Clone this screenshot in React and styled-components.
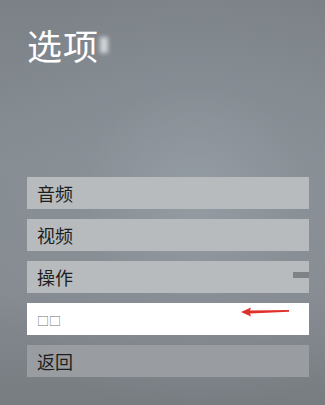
import React from "react";
import styled, { createGlobalStyle } from "styled-components";

const Global = createGlobalStyle`
  html, body { margin: 0; padding: 0; }
  body {
    width: 325px;
    height: 405px;
    overflow: hidden;
    font-family: "Noto Sans CJK SC", "Noto Sans", sans-serif;
  }
`;

const Screen = styled.div`
  position: relative;
  width: 325px;
  height: 405px;
  box-sizing: border-box;
  padding: 20px 16px 0 27px;
  background:
    radial-gradient(ellipse 70% 55% at 60% 48%, rgba(150,158,165,0.9) 0%, rgba(140,147,154,0.4) 50%, rgba(120,126,132,0) 100%),
    linear-gradient(180deg, #7b8187 0%, #868d93 40%, #868c92 70%, #777c81 100%);
  display: flex;
  flex-direction: column;
  overflow: hidden;
`;

const TitleRow = styled.div`
  display: flex;
  align-items: center;
  height: 50px;
`;

const Title = styled.h1`
  margin: 0;
  font-size: 35px;
  font-weight: 400;
  color: #ffffff;
  line-height: 50px;
  letter-spacing: 1px;
`;

const Glow = styled.span`
  width: 8px;
  height: 16px;
  margin-left: 1px;
  background: rgba(235, 238, 240, 0.75);
  filter: blur(2px);
`;

const Menu = styled.div`
  margin-top: 107px;
  width: 282px;
  display: flex;
  flex-direction: column;
  gap: 10px;
`;

const Item = styled.div`
  position: relative;
  height: 32px;
  box-sizing: border-box;
  padding-left: 10px;
  display: flex;
  align-items: ${(p) => (p.$selected ? "flex-end" : "center")};
  padding-bottom: ${(p) => (p.$selected ? "8px" : "0")};
  background: ${(p) =>
    p.$selected ? "#ffffff" : p.$dim ? "#999da1" : "#b7bbbe"};
  color: ${(p) => (p.$selected ? "#707070" : "#1e1e1e")};
  font-size: ${(p) => (p.$selected ? "12px" : "18px")};
  line-height: 1;
`;

const Notch = styled.span`
  position: absolute;
  right: 0;
  top: 11px;
  width: 16px;
  height: 6px;
  background: #7f8387;
`;

const Arrow = styled.svg`
  position: absolute;
  left: 212px;
  top: 3px;
`;

export default function App() {
  return (
    <>
      <Global />
      <Screen>
        <TitleRow>
          <Title>选项</Title>
          <Glow />
        </TitleRow>
        <Menu>
          <Item>音频</Item>
          <Item>视频</Item>
          <Item>
            操作
            <Notch />
          </Item>
          <Item $selected>
            □□
            <Arrow width="52" height="12" viewBox="0 0 52 12">
              <path d="M2 6 L12 1.5 L11 4.6 L50 4 L50 5.8 L11 7.6 L12 10.5 Z" fill="#e0302a" />
            </Arrow>
          </Item>
          <Item $dim>返回</Item>
        </Menu>
      </Screen>
    </>
  );
}
